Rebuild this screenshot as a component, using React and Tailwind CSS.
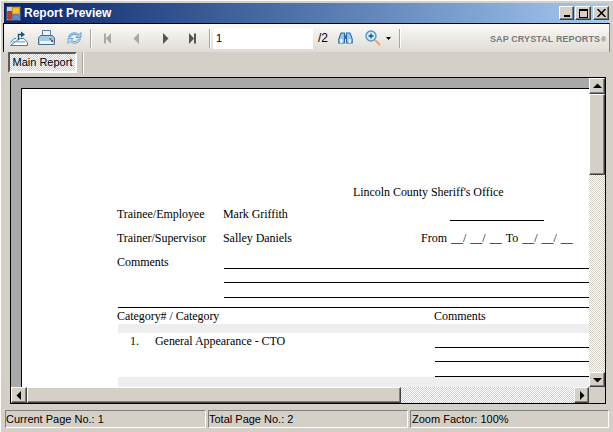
const Dither = 'bg-[repeating-conic-gradient(#d4d0c8_0_25%,#ffffff_0_50%)] bg-[length:2px_2px]';
const raised = 'border border-t-white border-l-white border-r-[#404040] border-b-[#404040] bg-[#d4d0c8] shadow-[inset_-1px_-1px_0_#808080]';

const Arrow = ({ dir }) => {
  const points = {
    up: '0,5 9,5 4.5,0.5',
    down: '0,1 9,1 4.5,5.5',
    left: '5,0 5,9 0.5,4.5',
    right: '1,0 1,9 5.5,4.5',
  };
  const vertical = dir === 'up' || dir === 'down';
  return (
    <svg width={vertical ? 9 : 6} height={vertical ? 6 : 9}>
      <polygon points={points[dir]} fill="#000" />
    </svg>
  );
};

const ScrollButton = ({ dir, className }) => (
  <div className={`flex items-center justify-center shrink-0 ${raised} ${className}`}>
    <Arrow dir={dir} />
  </div>
);

const AppIcon = () => (
  <svg width="15" height="15" viewBox="0 0 17 17" className="shrink-0">
    <rect x="0.5" y="0.5" width="16" height="16" fill="#c9cdd6" stroke="#3c4868" />
    <rect x="7" y="2" width="8" height="7" fill="#f7c331" stroke="#a8761a" strokeWidth="0.7" />
    <rect x="2" y="6" width="4" height="9" fill="#c8382a" stroke="#7c1d14" strokeWidth="0.7" />
    <rect x="7" y="10" width="8" height="5" fill="#5a8fd6" stroke="#27508e" strokeWidth="0.7" />
  </svg>
);

const ExportIcon = () => (
  <svg width="18" height="16" viewBox="0 0 18 16">
    <path d="M0.5 12.5 L4 8.5 H6 M10 8.5 H14 L17.5 12.5 V15.5 H0.5 Z" fill="#fff" stroke="#2f86c9" />
    <rect x="3" y="11" width="12" height="1.5" fill="#7fbbe6" />
    <path d="M8.5 10 V4.5 H11" fill="none" stroke="#25507a" strokeWidth="1.4" />
    <path d="M11 1.5 L15 4.5 L11 7.5 Z" fill="#25507a" />
  </svg>
);

const PrintIcon = () => (
  <svg width="17" height="16" viewBox="0 0 17 16">
    <path d="M4.5 0.5 H12.5 V5.5 H4.5 Z" fill="#eef3fa" stroke="#5c7ea8" />
    <path d="M2.5 5.5 H14.5 L16.5 8 V14.5 H0.5 V8 Z" fill="#a9c8e8" stroke="#44709f" />
    <rect x="2" y="11" width="13" height="3" fill="#f1f6fb" />
    <rect x="11.5" y="8" width="2" height="2" fill="#3aa13a" />
    <rect x="13" y="10" width="2" height="2" fill="#c8382a" />
  </svg>
);

const RefreshIcon = () => (
  <svg width="15" height="14" viewBox="0 0 15 14">
    <path d="M1.5 6 A6 5 0 0 1 12 3.5 L14 1.5 V6.5 H9 L10.7 4.8 A4 3.5 0 0 0 3.6 6 Z" fill="#a9d2ef" stroke="#4f97cc" strokeWidth="0.8" />
    <path d="M13.5 8 A6 5 0 0 1 3 10.5 L1 12.5 V7.5 H6 L4.3 9.2 A4 3.5 0 0 0 11.4 8 Z" fill="#cfe5f6" stroke="#4f97cc" strokeWidth="0.8" />
  </svg>
);

const NavIcon = ({ dir, stop, color }) => (
  <svg width="7" height="11" viewBox="0 0 7 11">
    {dir === 'left' ? (
      <>
        {stop && <rect x="0" y="0.5" width="2" height="10" fill={color} />}
        <polygon points={stop ? '7,0 7,11 2,5.5' : '6,0 6,11 0.5,5.5'} fill={color} />
      </>
    ) : (
      <>
        <polygon points={stop ? '0,0 0,11 5,5.5' : '1,0 1,11 6.5,5.5'} fill={color} />
        {stop && <rect x="5" y="0.5" width="2" height="10" fill={color} />}
      </>
    )}
  </svg>
);

const BinocularsIcon = () => (
  <svg width="15" height="13" viewBox="0 0 15 13">
    <path d="M3 1 H6.5 V11 H0.8 V7 Z" fill="#9cc6e8" stroke="#2b6ca8" strokeWidth="1.1" />
    <path d="M12 1 H8.5 V11 H14.2 V7 Z" fill="#9cc6e8" stroke="#2b6ca8" strokeWidth="1.1" />
    <rect x="6" y="3" width="3" height="4" fill="#2b6ca8" />
    <rect x="2.3" y="7" width="2" height="4" fill="#fff" />
    <rect x="10.7" y="7" width="2" height="4" fill="#fff" />
  </svg>
);

const ZoomIcon = () => (
  <svg width="16" height="16" viewBox="0 0 16 16">
    <circle cx="6" cy="6" r="5" fill="#d3e8f8" stroke="#4f97cc" strokeWidth="1.4" />
    <path d="M3.5 6 H8.5 M6 3.5 V8.5" stroke="#25507a" strokeWidth="1.3" />
    <path d="M10 10 L15 15" stroke="#e8a46a" strokeWidth="2" />
  </svg>
);

const ToolSep = () => <div className="w-[2px] h-[19px] bg-[#a9a7a0] border-r border-white shrink-0" />;

const WinButton = ({ className, children }) => (
  <div className={`h-[14px] flex items-center justify-center shrink-0 ${raised} ${className}`}>{children}</div>
);

const ReportRow = ({ className, children }) => (
  <div className={`flex items-center whitespace-nowrap ${className}`}>{children}</div>
);

const Rule = ({ className }) => <div className={`h-[1px] bg-black ${className}`} />;

const StatusPanel = ({ className, children }) => (
  <div className={`h-[18px] flex items-center border border-t-[#808080] border-l-[#808080] border-r-white border-b-white overflow-hidden whitespace-nowrap ${className}`}>
    {children}
  </div>
);

const App = () => {
  return (
    <div className="w-[613px] h-[432px] bg-[#d4d0c8] overflow-hidden flex flex-col font-['Liberation_Sans',sans-serif] text-[11px] text-[#000] border-t border-l border-white pl-[2px]">
      {/* title bar */}
      <div className="h-[20px] mt-[2px] ml-[1px] mr-[4px] flex items-center pl-[2px] bg-gradient-to-r from-[#0a246a] to-[#a6caf0]">
        <AppIcon />
        <div className="ml-[3px] text-white font-bold text-[12px] flex-1">Report Preview</div>
        <div className="flex items-center">
          <WinButton className="w-[15px] mr-[1px] items-end pb-[2px]"><div className="w-[6px] h-[2px] bg-black" /></WinButton>
          <WinButton className="w-[16px]"><div className="w-[9px] h-[9px] border border-black border-t-2" /></WinButton>
          <WinButton className="w-[16px] ml-[2px]">
            <svg width="9" height="8" viewBox="0 0 9 8"><path d="M0.5 0 L8.5 8 M8.5 0 L0.5 8" stroke="#000" strokeWidth="1.5" /></svg>
          </WinButton>
        </div>
      </div>

      {/* toolbar */}
      <div className="h-[28px] mr-[3px] box-content border-t border-l border-r border-t-black border-l-black border-r-[#808080] flex items-center whitespace-nowrap bg-gradient-to-b from-[#fbfaf8] to-[#dfdcd5] pl-[6px]">
        <ExportIcon />
        <div className="ml-[10px] flex"><PrintIcon /></div>
        <div className="ml-[12px] flex"><RefreshIcon /></div>
        <div className="ml-[8px]"><ToolSep /></div>
        <div className="ml-[12px] flex"><NavIcon dir="left" stop color="#a8a8a8" /></div>
        <div className="ml-[22px] flex"><NavIcon dir="left" color="#a8a8a8" /></div>
        <div className="ml-[22px] flex"><NavIcon dir="right" color="#555" /></div>
        <div className="ml-[20px] flex"><NavIcon dir="right" stop color="#555" /></div>
        <div className="ml-[13px]"><ToolSep /></div>
        <div className="w-[100px] h-[21px] bg-white ml-[2px] pl-[3px] flex items-center">1</div>
        <div className="ml-[5px] text-[12px]">/2</div>
        <div className="ml-[10px] flex"><BinocularsIcon /></div>
        <div className="ml-[12px] flex"><ZoomIcon /></div>
        <svg width="5" height="3" className="ml-[5px] mt-[1px]"><polygon points="0,0 5,0 2.5,3" fill="#000" /></svg>
        <div className="ml-[8px]"><ToolSep /></div>
        <div className="ml-[89px] text-[9px] font-bold text-[#7a7a7a] tracking-[0.1px] flex items-center mt-[4px]">
          SAP CRYSTAL REPORTS<span className="text-[7px] ml-[1px]">®</span>
        </div>
      </div>

      {/* tabs */}
      <div className="h-[25px] ml-[5px] flex">
        <div className={`w-[69px] h-[21px] flex items-center justify-center border-2 border-t-[#5a5a5a] border-l-[#5a5a5a] border-r-white border-b-white ${Dither}`}>
          Main Report
        </div>
        <div className="w-[2px] h-[22px] ml-[5px] bg-[#a9a7a0] border-r border-white" />
      </div>

      {/* viewer frame */}
      <div className="w-[596px] h-[327px] ml-[7px] border border-black flex flex-col bg-[#d4d0c8]">
        <div className="flex flex-1 min-h-0">
          <div className="flex-1 min-w-0 bg-[#a9a9a9] pl-[10px] pt-[10px]">
            <div className="h-full border-l border-t border-black bg-white overflow-hidden font-['Liberation_Serif',serif] text-[12px] tracking-[-0.05px]">
              <div className="pl-[95px]">
                {/* page header */}
                <ReportRow className="h-[16px] mt-[95px] pl-[236px]">Lincoln County Sheriff's Office</ReportRow>
                <ReportRow className="h-[14px] mt-[7px]">
                  <div className="w-[106px]">Trainee/Employee</div>
                  <div className="w-[227px]">Mark Griffith</div>
                  <Rule className="w-[94px] self-end" />
                </ReportRow>
                <ReportRow className="h-[14px] mt-[10px]">
                  <div className="w-[106px]">Trainer/Supervisor</div>
                  <div className="w-[198px]">Salley Daniels</div>
                  <div className="tracking-normal [word-spacing:1px]">From __/ __/ __<span className="ml-[4px]">To __/ __/ __</span></div>
                </ReportRow>
                <ReportRow className="h-[14px] mt-[10px]">
                  <div className="w-[107px]">Comments</div>
                  <Rule className="flex-1 self-end" />
                </ReportRow>
                <Rule className="ml-[107px] mt-[13px]" />
                <Rule className="ml-[107px] mt-[14px]" />
                <Rule className="ml-[1px] mt-[9px]" />

                {/* table header */}
                <ReportRow className="h-[16px]">
                  <div className="w-[317px]">Category# / Category</div>
                  <div>Comments</div>
                </ReportRow>
                <div className="h-[9px] ml-[1px] bg-[#eeeeee]" />
                <ReportRow className="h-[14px] mt-[1px]">
                  <div className="w-[38px] pl-[13px]">1.</div>
                  <div className="w-[280px]">General Appearance - CTO</div>
                  <Rule className="flex-1 self-end" />
                </ReportRow>
                <Rule className="ml-[318px] mt-[13px]" />
                <Rule className="ml-[318px] mt-[14px]" />
                <div className="h-[10px] ml-[1px] bg-[#eeeeee]" />
              </div>
            </div>
          </div>
          {/* vertical scrollbar */}
          <div className={`w-[16px] flex flex-col shrink-0 ${Dither}`}>
            <ScrollButton dir="up" className="h-[16px]" />
            <div className={`h-[81px] shrink-0 ${raised}`} />
            <div className="flex-1" />
            <ScrollButton dir="down" className="h-[15px]" />
          </div>
        </div>
        {/* horizontal scrollbar */}
        <div className="h-[16px] flex shrink-0">
          <div className="flex-1 flex min-w-0">
            <ScrollButton dir="left" className="w-[16px]" />
            <div className={`w-[374px] shrink-0 ${raised}`} />
            <div className={`flex-1 ${Dither}`} />
            <ScrollButton dir="right" className="w-[15px]" />
          </div>
          <div className="w-[16px] shrink-0 bg-[#d4d0c8]" />
        </div>
      </div>

      {/* status bar */}
      <div className="mt-[6px] ml-[2px] flex gap-[2px]">
        <StatusPanel className="w-[201px]">Current Page No.: 1</StatusPanel>
        <StatusPanel className="w-[200px]">Total Page No.: 2</StatusPanel>
        <StatusPanel className="w-[199px] pl-[1px]">Zoom Factor: 100%</StatusPanel>
      </div>
    </div>
  );
};

export default App;
